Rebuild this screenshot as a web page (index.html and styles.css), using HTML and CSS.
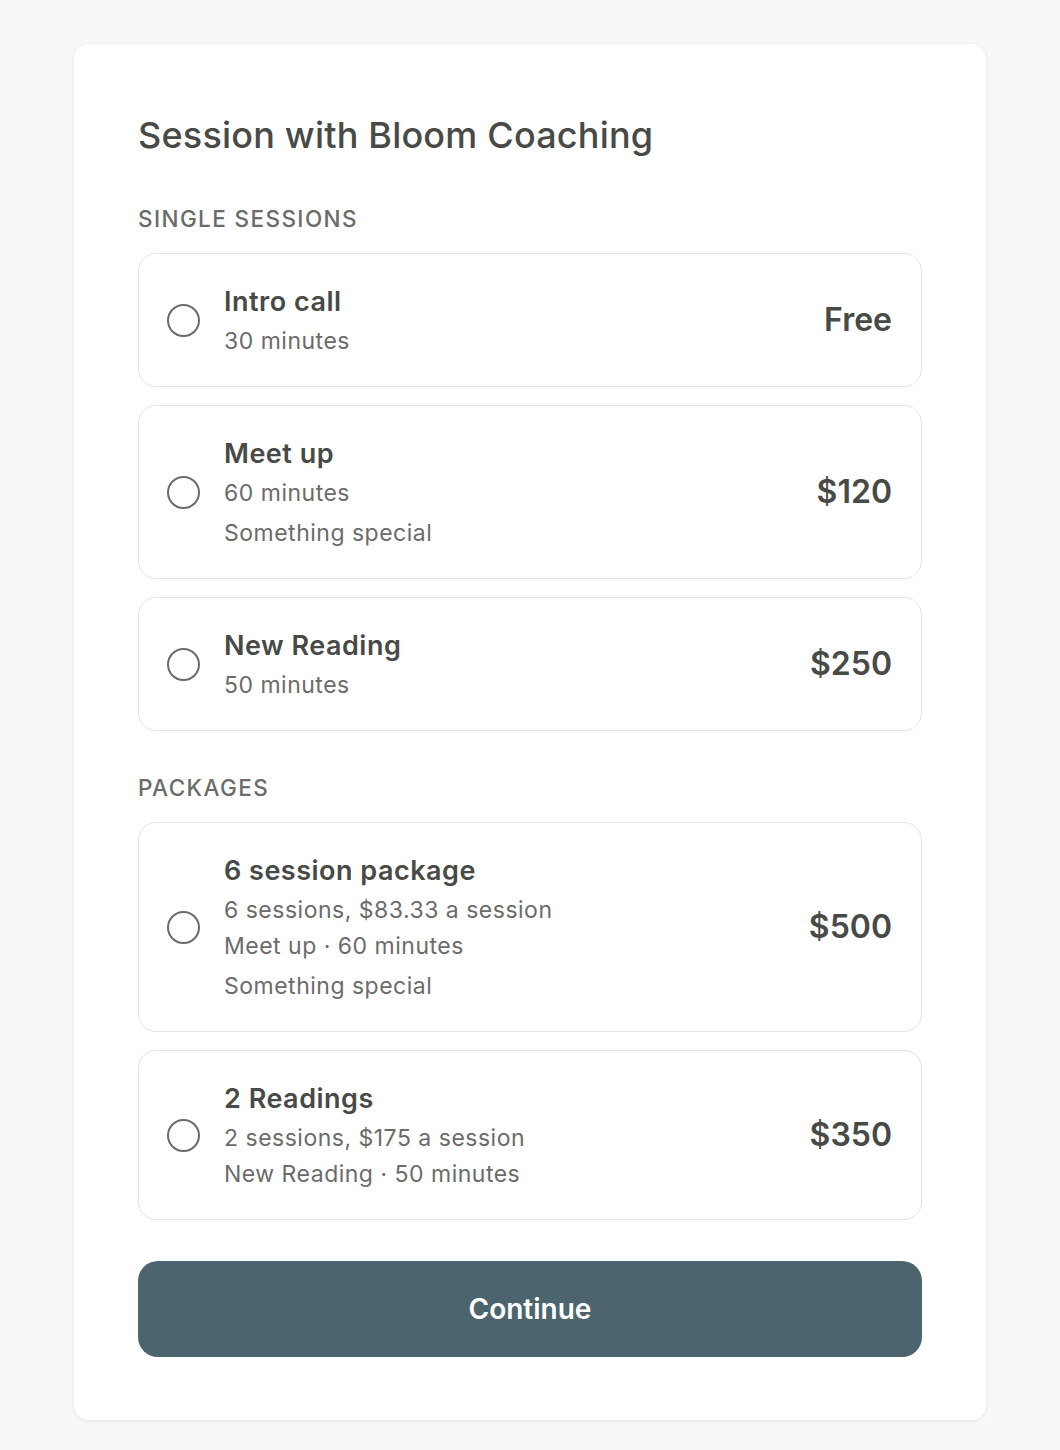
FILE: index.html
```html
<!DOCTYPE html>
<html lang="en">
<head>
<meta charset="utf-8">
<title>Session with Bloom Coaching</title>
<link rel="stylesheet" href="styles.css">
</head>
<body>
<main class="panel">
  <h1 class="title">Session with Bloom Coaching</h1>

  <h2 class="group-label">Single sessions</h2>
  <div class="options">
    <label class="option">
      <span class="radio"></span>
      <span class="info">
        <span class="name">Intro call</span>
        <span class="line">30 minutes</span>
      </span>
      <span class="price">Free</span>
    </label>
    <label class="option">
      <span class="radio"></span>
      <span class="info">
        <span class="name">Meet up</span>
        <span class="line">60 minutes</span>
        <span class="line desc">Something special</span>
      </span>
      <span class="price">$120</span>
    </label>
    <label class="option">
      <span class="radio"></span>
      <span class="info">
        <span class="name">New Reading</span>
        <span class="line">50 minutes</span>
      </span>
      <span class="price">$250</span>
    </label>
  </div>

  <h2 class="group-label">Packages</h2>
  <div class="options">
    <label class="option">
      <span class="radio"></span>
      <span class="info">
        <span class="name">6 session package</span>
        <span class="line">6 sessions, $83.33 a session</span>
        <span class="line">Meet up · 60 minutes</span>
        <span class="line desc">Something special</span>
      </span>
      <span class="price">$500</span>
    </label>
    <label class="option">
      <span class="radio"></span>
      <span class="info">
        <span class="name">2 Readings</span>
        <span class="line">2 sessions, $175 a session</span>
        <span class="line">New Reading · 50 minutes</span>
      </span>
      <span class="price">$350</span>
    </label>
  </div>

  <button class="continue" type="button">Continue</button>
</main>
</body>
</html>
```

FILE: styles.css
```css
* { box-sizing: border-box; }

html, body {
  margin: 0;
  padding: 0;
}

body {
  background: #f8f8f6;
  font-family: Inter, "Noto Sans", "Liberation Sans", sans-serif;
  color: #474a46;
  padding: 44px 74px 30px;
}

.panel {
  background: #ffffff;
  border-radius: 14px;
  box-shadow: 0 1px 4px rgba(0, 0, 0, 0.08), 0 0 1px rgba(0, 0, 0, 0.06);
  padding: 64px 64px 63px;
  display: flex;
  flex-direction: column;
}

.title {
  margin: 0;
  font-size: 36px;
  line-height: 54px;
  font-weight: 500;
  color: #474a46;
  letter-spacing: 0.2px;
}

.group-label {
  margin: 41px 0 18px;
  font-size: 22.5px;
  line-height: 32px;
  font-weight: 500;
  text-transform: uppercase;
  letter-spacing: 1.4px;
  color: #6a6c69;
}

.options {
  display: flex;
  flex-direction: column;
  gap: 18px;
}

.option {
  display: flex;
  align-items: center;
  border: 1.5px solid #e4e4e2;
  border-radius: 18px;
  padding: 27.5px 29px 27.5px 28px;
  background: #ffffff;
  cursor: pointer;
}

.radio {
  flex: none;
  width: 33px;
  height: 33px;
  border: 2px solid #6b6b6b;
  border-radius: 50%;
  margin-right: 24px;
}

.info {
  flex: 1;
  display: flex;
  flex-direction: column;
}

.name {
  font-size: 27px;
  line-height: 40px;
  font-weight: 600;
  color: #474a46;
  margin-bottom: 1px;
  letter-spacing: 0.5px;
}

.line {
  font-size: 23px;
  line-height: 36px;
  font-weight: 400;
  color: #6b6b6b;
  letter-spacing: 0.5px;
}

.line.desc {
  margin-top: 4px;
}

.price {
  flex: none;
  font-size: 32px;
  line-height: 40px;
  font-weight: 600;
  color: #474a46;
}

.continue {
  margin-top: 41px;
  height: 96px;
  border: none;
  border-radius: 20px;
  background: #4b646d;
  color: #ffffff;
  font-family: inherit;
  font-size: 28px;
  font-weight: 600;
  cursor: pointer;
}
```
